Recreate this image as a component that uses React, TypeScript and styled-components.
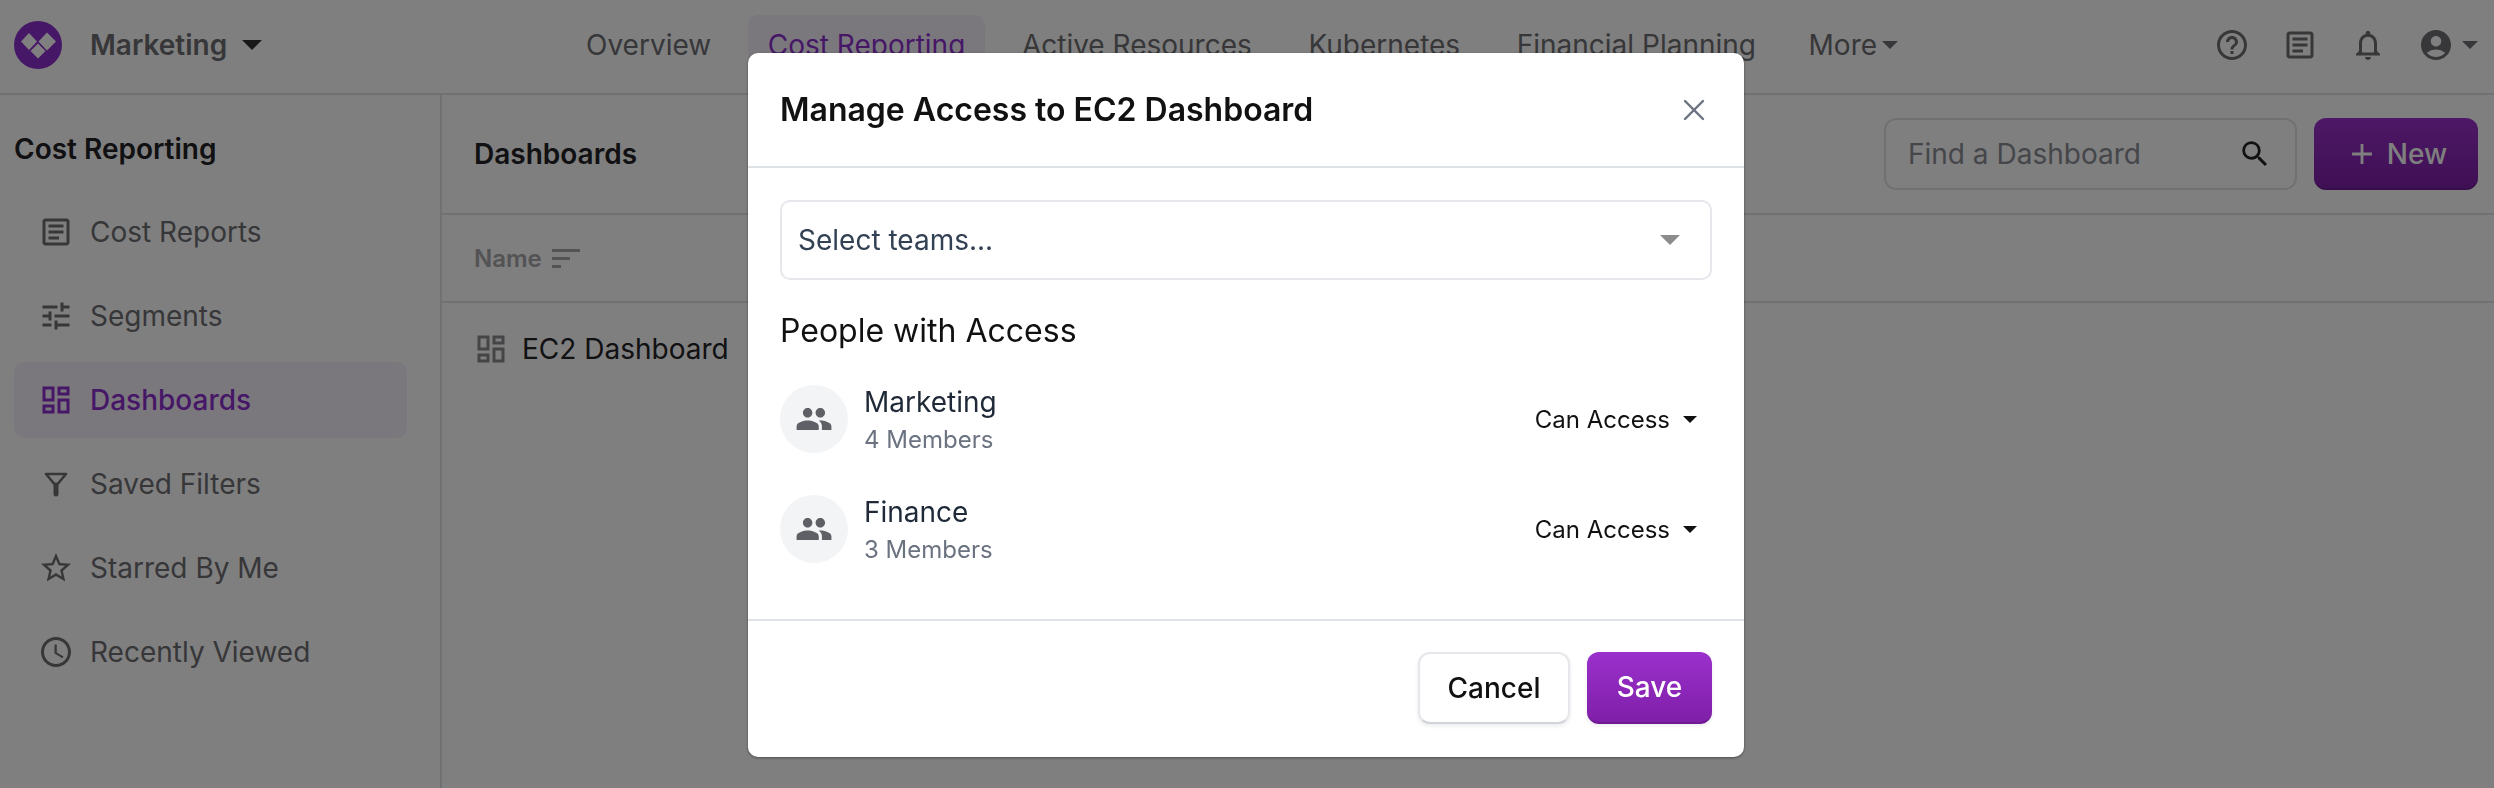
import React from "react";
import styled, { createGlobalStyle } from "styled-components";
import { X } from "lucide-react";
import {
  MdAccessTime,
  MdAccountCircle,
  MdAdd,
  MdHelpOutline,
  MdOutlineArticle,
  MdOutlineDashboard,
  MdOutlineNotifications,
  MdOutlineTune,
  MdPeople,
  MdSearch,
  MdStarBorder,
} from "react-icons/md";

const GlobalStyle = createGlobalStyle`
  html, body {
    margin: 0;
    height: 100%;
    overflow: hidden;
    background: #fff;
    font-family: Inter, "Liberation Sans", sans-serif;
  }
  * { box-sizing: border-box; }
`;

const Page = styled.div`
  width: 2494px;
  height: 788px;
  display: flex;
  flex-direction: column;
  color: #6e6e72;
  font-size: 28px;
`;

const TopBar = styled.header`
  height: 95px;
  flex: none;
  display: flex;
  align-items: center;
  padding: 0 16px 4px 14px;
  border-bottom: 2px solid #dee2e6;
`;

const Brand = styled.div`
  width: 552px;
  flex: none;
  display: flex;
  align-items: center;
  gap: 28px;
  font-weight: 600;
  font-size: 28px;
`;

const Caret = styled.span<{ $size: number; $color?: string }>`
  display: inline-block;
  border-left: ${(p) => p.$size}px solid transparent;
  border-right: ${(p) => p.$size}px solid transparent;
  border-top: ${(p) => p.$size}px solid ${(p) => p.$color ?? "currentColor"};
`;

const BrandCaret = styled(Caret)`
  margin-left: -13px;
`;

const Nav = styled.nav`
  display: flex;
  align-items: center;
  gap: 16.6px;
`;

const NavItem = styled.a<{ $active?: boolean }>`
  display: flex;
  align-items: center;
  gap: 6px;
  height: 60px;
  padding: 0 20px;
  border-radius: 10px;
  color: ${(p) => (p.$active ? "#8e2ecf" : "inherit")};
  background: ${(p) => (p.$active ? "#f6f1fb" : "transparent")};
`;

const MoreItem = styled(NavItem)`
  margin-left: -4px;
  gap: 5px;
`;

const TopIcons = styled.div`
  margin-left: auto;
  display: flex;
  align-items: center;
  gap: 32px;
  color: #6f6f73;
`;

const UserMenu = styled.div`
  display: flex;
  align-items: center;
  gap: 8px;
`;

const Body = styled.div`
  flex: 1;
  display: flex;
  min-height: 0;
`;

const Sidebar = styled.aside`
  width: 442px;
  flex: none;
  padding: 0 33px 0 14px;
  border-right: 2px solid #dee2e6;
`;

const SideTitle = styled.h2`
  margin: 0;
  height: 99px;
  padding-top: 9px;
  display: flex;
  align-items: center;
  font-size: 28px;
  font-weight: 600;
  color: #222226;
`;

const SideList = styled.div`
  display: flex;
  flex-direction: column;
  gap: 8px;
`;

const SideItem = styled.a<{ $active?: boolean }>`
  height: 76px;
  display: flex;
  align-items: center;
  gap: 16px;
  padding-left: 24px;
  border-radius: 10px;
  color: ${(p) => (p.$active ? "#8e2ecf" : "inherit")};
  background: ${(p) => (p.$active ? "#f6f1fb" : "transparent")};
  font-weight: ${(p) => (p.$active ? 500 : 400)};
`;

const SideIcon = styled.span`
  width: 36px;
  height: 36px;
  flex: none;
  display: flex;
  align-items: center;
  justify-content: center;
  font-size: 36px;
`;

const Main = styled.main`
  flex: 1;
  min-width: 0;
  display: flex;
  flex-direction: column;
`;

const MainHeader = styled.div`
  height: 120px;
  flex: none;
  display: flex;
  align-items: center;
  gap: 17px;
  padding: 0 16px 0 32px;
  border-bottom: 2px solid #dee2e6;
`;

const MainTitle = styled.h1`
  margin: 0 auto 0 0;
  font-size: 28px;
  font-weight: 600;
  color: #222226;
`;

const SearchBox = styled.div`
  width: 413px;
  height: 72px;
  display: flex;
  align-items: center;
  justify-content: space-between;
  padding: 0 23px 0 22px;
  border: 2px solid #dee2e6;
  border-radius: 12px;
  color: #8a8d94;
`;

const SearchIcon = styled(MdSearch)`
  color: #222;
  font-size: 34px;
`;

const NewButton = styled.button`
  width: 164px;
  height: 72px;
  display: flex;
  align-items: center;
  justify-content: center;
  gap: 8px;
  padding: 2px 0 0;
  border: 0;
  border-bottom: 2px solid #6f1a94;
  border-radius: 12px;
  background: linear-gradient(#9b30cc, #7f1fa8);
  color: #fff;
  font: 500 28px Inter, sans-serif;
`;

const TableHead = styled.div`
  height: 88px;
  flex: none;
  display: flex;
  align-items: center;
  gap: 10px;
  padding-left: 32px;
  border-bottom: 2px solid #dee2e6;
  color: #a6a6aa;
  font-size: 24px;
  font-weight: 600;
`;

const TableRow = styled.div`
  height: 92px;
  display: flex;
  align-items: center;
  gap: 13px;
  padding-left: 31px;
  color: #222226;
`;

const RowIcon = styled(SideIcon)`
  color: #8a8a8e;
`;

const Overlay = styled.div`
  position: fixed;
  inset: 0;
  display: flex;
  justify-content: center;
  align-items: flex-start;
  padding: 53px 2px 0 0;
  background: rgba(0, 0, 0, 0.5);
`;

const Modal = styled.section`
  width: 996px;
  height: 704px;
  display: flex;
  flex-direction: column;
  background: #fff;
  border-radius: 10px;
  box-shadow: 0 1px 3px rgba(0, 0, 0, 0.4);
  color: #111827;
  font-size: 28px;
`;

const ModalHeader = styled.div`
  height: 115px;
  flex: none;
  display: flex;
  align-items: center;
  justify-content: space-between;
  padding: 0 32px;
  border-bottom: 2px solid #dee2e6;
  font-size: 32px;
  font-weight: 600;
  color: #111;
`;

const CloseIcon = styled(X)`
  color: #6b7280;
`;

const ModalBody = styled.div`
  flex: 1;
  padding: 32px 32px 0;
`;

const SelectBox = styled.div`
  height: 80px;
  display: flex;
  align-items: center;
  justify-content: space-between;
  padding: 0 30px 1px 16px;
  border: 2px solid #e5e7eb;
  border-radius: 10px;
  color: #334155;
`;

const SectionTitle = styled.h3`
  margin: 31px 0 34px;
  font-size: 32px;
  line-height: 40px;
  font-weight: 400;
  color: #111;
`;

const TeamList = styled.div`
  display: flex;
  flex-direction: column;
  gap: 42px;
`;

const TeamRow = styled.div`
  height: 68px;
  display: flex;
  align-items: center;
`;

const Avatar = styled.div`
  width: 68px;
  height: 68px;
  flex: none;
  display: flex;
  align-items: center;
  justify-content: center;
  border-radius: 50%;
  background: #f3f4f6;
  color: #5f6066;
  font-size: 38px;
`;

const TeamInfo = styled.div`
  margin-left: 16px;
  padding-top: 2px;
  flex: 1;
  display: flex;
  flex-direction: column;
  gap: 6px;
`;

const TeamName = styled.div`
  font-size: 28px;
  line-height: 34px;
  color: #1f2937;
`;

const TeamMeta = styled.div`
  font-size: 24px;
  line-height: 30px;
  color: #6b7280;
`;

const AccessMenu = styled.div`
  display: flex;
  align-items: center;
  gap: 13px;
  padding-right: 15px;
  font-size: 24px;
  color: #111;
`;

const ModalFooter = styled.div`
  height: 138px;
  flex: none;
  display: flex;
  justify-content: flex-end;
  align-items: flex-start;
  gap: 17px;
  padding: 31px 32px 0;
  border-top: 2px solid #dee2e6;
`;

const Button = styled.button<{ $primary?: boolean }>`
  height: 72px;
  padding: 0;
  width: ${(p) => (p.$primary ? 125 : 152)}px;
  border-radius: 12px;
  font: 500 28px Inter, sans-serif;
  color: ${(p) => (p.$primary ? "#fff" : "#111")};
  background: ${(p) => (p.$primary ? "linear-gradient(#9b30cc, #7f1fa8)" : "#fff")};
  border: ${(p) => (p.$primary ? "0" : "2px solid #e5e7eb")};
  border-bottom: 2px solid ${(p) => (p.$primary ? "#6f1a94" : "#d1d5db")};
  box-shadow: 0 2px 4px rgba(0, 0, 0, 0.08);
`;

const Logo = () => (
  <svg width="48" height="48" viewBox="0 0 48 48" style={{ flex: "none" }}>
    <circle cx="24" cy="24" r="24" fill="#8e2ecf" />
    <path
      d="M15 12l8 8.5-8 8.5-8-8.5zM33 11.5l9 9-9 9-8.5-9zM24 22.5l7.5 7.5-7.5 7.5-7.5-7.5z"
      fill="#fff"
    />
  </svg>
);

const Funnel = () => (
  <svg width="26" height="26" viewBox="0 0 26 26" fill="none" stroke="currentColor" strokeWidth="2.6">
    <path d="M3 3h20l-10 12L3 3z" strokeLinejoin="round" />
    <path d="M13 14v9" strokeWidth="5" strokeLinecap="round" />
  </svg>
);

const SortIcon = () => (
  <svg width="28" height="20" viewBox="0 0 28 20" fill="currentColor">
    <rect x="0" y="1" width="28" height="3" />
    <rect x="0" y="9" width="18" height="3" />
    <rect x="0" y="17" width="9" height="3" />
  </svg>
);

const sideItems = [
  { label: "Cost Reports", icon: <MdOutlineArticle /> },
  { label: "Segments", icon: <MdOutlineTune /> },
  { label: "Dashboards", icon: <MdOutlineDashboard />, active: true },
  { label: "Saved Filters", icon: <Funnel /> },
  { label: "Starred By Me", icon: <MdStarBorder /> },
  { label: "Recently Viewed", icon: <MdAccessTime /> },
];

const teams = [
  { name: "Marketing", members: "4 Members" },
  { name: "Finance", members: "3 Members" },
];

export default function App() {
  return (
    <>
      <GlobalStyle />
      <Page>
        <TopBar>
          <Brand>
            <Logo />
            <span>Marketing</span>
            <BrandCaret $size={10} $color="#333" />
          </Brand>
          <Nav>
            <NavItem>Overview</NavItem>
            <NavItem $active>Cost Reporting</NavItem>
            <NavItem>Active Resources</NavItem>
            <NavItem>Kubernetes</NavItem>
            <NavItem>Financial Planning</NavItem>
            <MoreItem>
              More <Caret $size={8} />
            </MoreItem>
          </Nav>
          <TopIcons>
            <MdHelpOutline size={36} />
            <MdOutlineArticle size={36} />
            <MdOutlineNotifications size={36} />
            <UserMenu>
              <MdAccountCircle size={36} />
              <Caret $size={8} />
            </UserMenu>
          </TopIcons>
        </TopBar>
        <Body>
          <Sidebar>
            <SideTitle>Cost Reporting</SideTitle>
            <SideList>
              {sideItems.map((item) => (
                <SideItem key={item.label} $active={item.active}>
                  <SideIcon>{item.icon}</SideIcon>
                  {item.label}
                </SideItem>
              ))}
            </SideList>
          </Sidebar>
          <Main>
            <MainHeader>
              <MainTitle>Dashboards</MainTitle>
              <SearchBox>
                Find a Dashboard
                <SearchIcon />
              </SearchBox>
              <NewButton>
                <MdAdd size={34} />
                New
              </NewButton>
            </MainHeader>
            <TableHead>
              Name <SortIcon />
            </TableHead>
            <TableRow>
              <RowIcon>
                <MdOutlineDashboard />
              </RowIcon>
              EC2 Dashboard
            </TableRow>
          </Main>
        </Body>
      </Page>
      <Overlay>
        <Modal>
          <ModalHeader>
            Manage Access to EC2 Dashboard
            <CloseIcon size={36} strokeWidth={1.6} />
          </ModalHeader>
          <ModalBody>
            <SelectBox>
              Select teams...
              <Caret $size={10} $color="#8c8c8c" />
            </SelectBox>
            <SectionTitle>People with Access</SectionTitle>
            <TeamList>
              {teams.map((team) => (
                <TeamRow key={team.name}>
                  <Avatar>
                    <MdPeople />
                  </Avatar>
                  <TeamInfo>
                    <TeamName>{team.name}</TeamName>
                    <TeamMeta>{team.members}</TeamMeta>
                  </TeamInfo>
                  <AccessMenu>
                    Can Access <Caret $size={7} />
                  </AccessMenu>
                </TeamRow>
              ))}
            </TeamList>
          </ModalBody>
          <ModalFooter>
            <Button>Cancel</Button>
            <Button $primary>Save</Button>
          </ModalFooter>
        </Modal>
      </Overlay>
    </>
  );
}
